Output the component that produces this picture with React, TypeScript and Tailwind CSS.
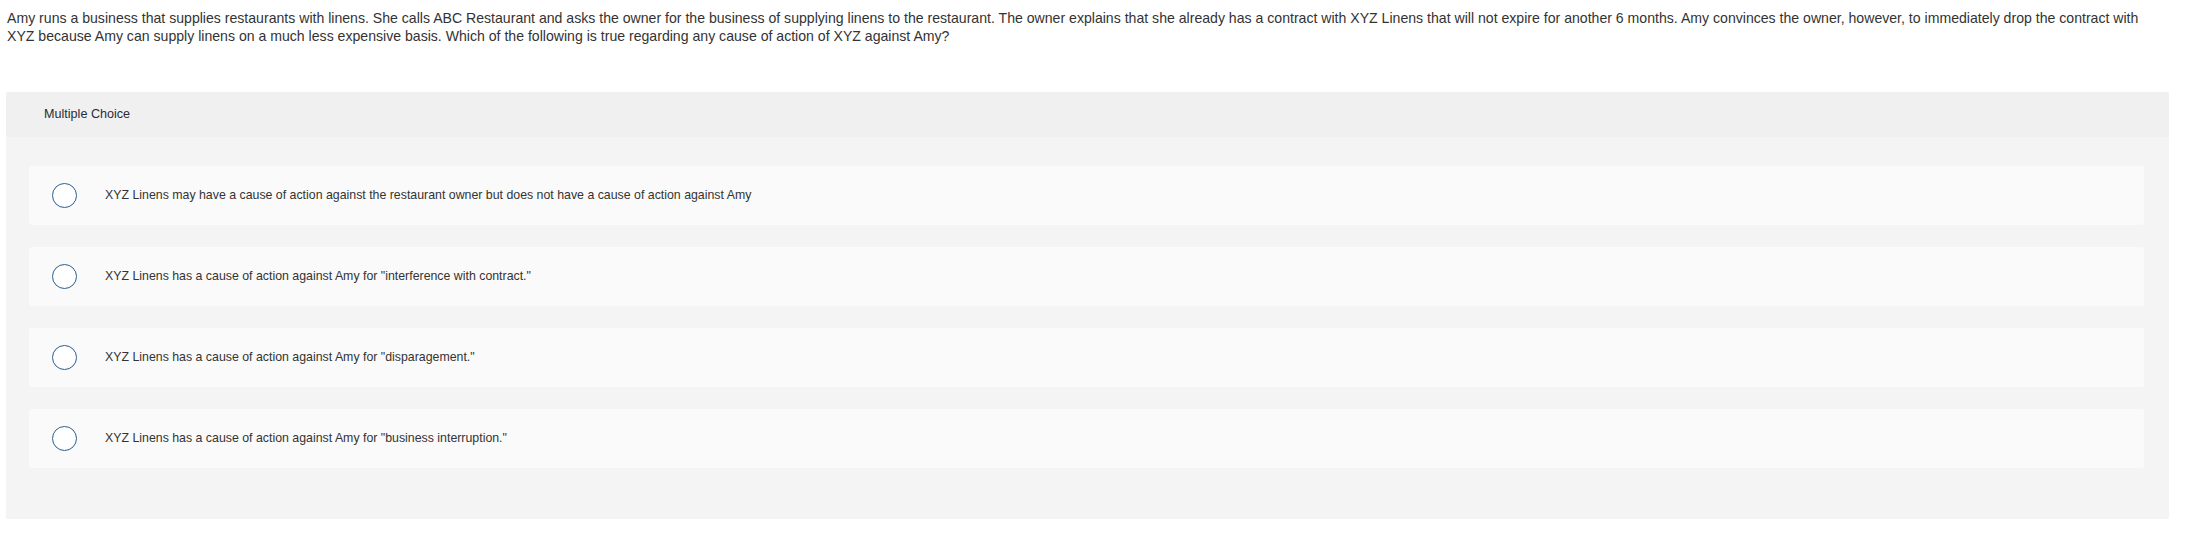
import React from 'react';

const QUESTION =
  'Amy runs a business that supplies restaurants with linens. She calls ABC Restaurant and asks the owner for the business of supplying linens to the restaurant. The owner explains that she already has a contract with XYZ Linens that will not expire for another 6 months. Amy convinces the owner, however, to immediately drop the contract with XYZ because Amy can supply linens on a much less expensive basis. Which of the following is true regarding any cause of action of XYZ against Amy?';

const CHOICES = [
  'XYZ Linens may have a cause of action against the restaurant owner but does not have a cause of action against Amy',
  'XYZ Linens has a cause of action against Amy for "interference with contract."',
  'XYZ Linens has a cause of action against Amy for "disparagement."',
  'XYZ Linens has a cause of action against Amy for "business interruption."',
];

function Radio() {
  return (
    <span className="block w-[25px] h-[25px] shrink-0 rounded-full border-[1.5px] border-[#2d5d8e] bg-white" />
  );
}

export default function App() {
  return (
    <div className="min-h-screen bg-white text-[#333] font-['Liberation_Sans',Arial,sans-serif]">
      {/* Question stem */}
      <p className="pl-[7px] pr-[29px] pt-[9px] text-[14.1px] leading-[18px] text-[#333]">{QUESTION}</p>

      {/* Answer panel */}
      <div className="mt-[47px] ml-[6px] w-[2163px] rounded-[2px] bg-[#f4f4f4] overflow-hidden">
        <div className="h-[45px] bg-[#f0f0f0] pl-[38px] flex items-center">
          <span className="text-[12.6px] text-[#2b2b33]">Multiple Choice</span>
        </div>

        <div className="pt-[29px] pb-[51px] pl-[23px] pr-[25px] flex flex-col gap-[22px]">
          {CHOICES.map((c) => (
            <div key={c} className="h-[59px] rounded-[3px] bg-[#fafafa] flex items-center pl-[23px] gap-[28px]">
              <Radio />
              <span className="text-[12.35px] text-[#333]">{c}</span>
            </div>
          ))}
        </div>
      </div>
    </div>
  );
}
